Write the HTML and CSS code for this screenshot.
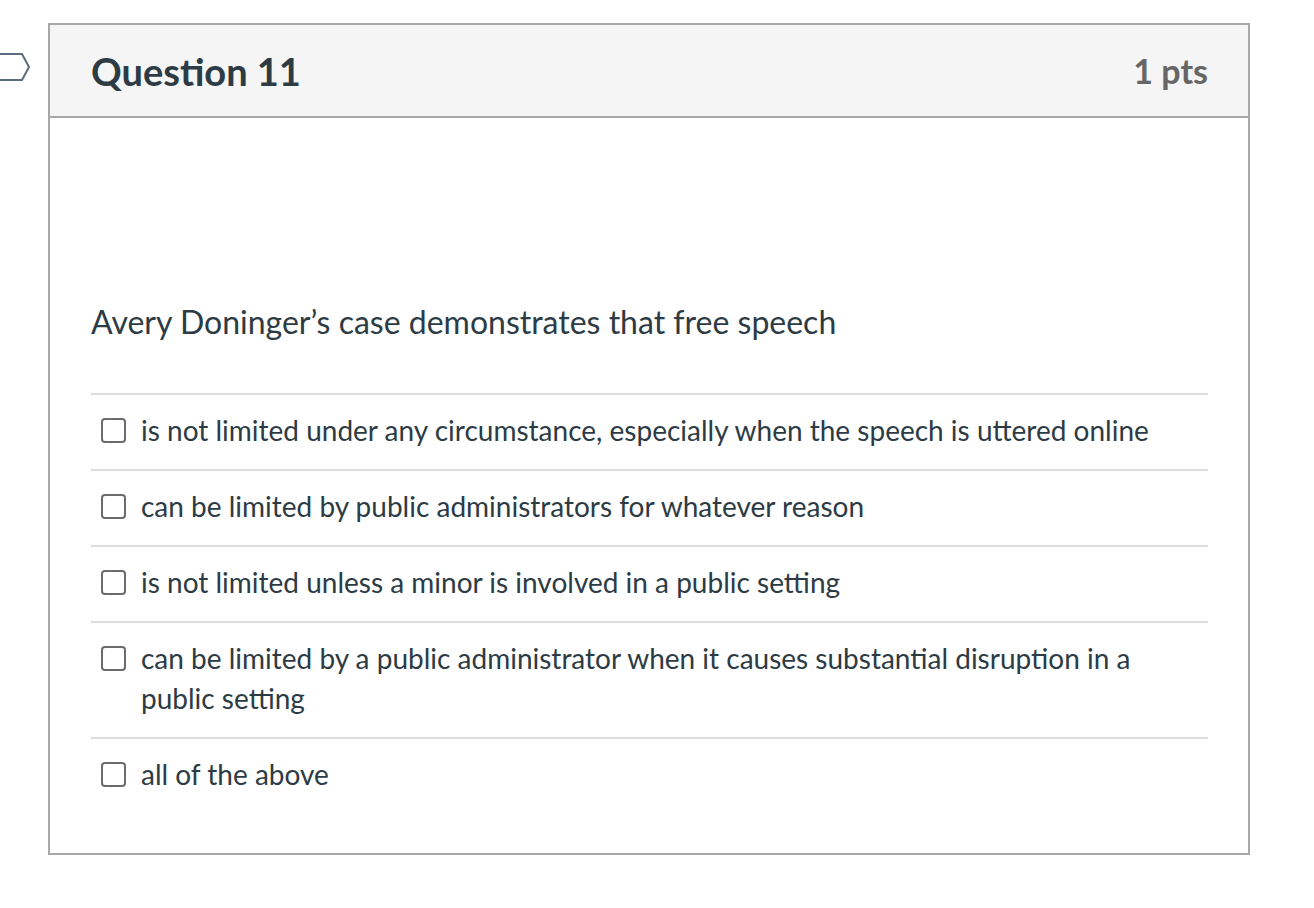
FILE: index.html
```html
<!DOCTYPE html>
<html lang="en">
<head>
<meta charset="utf-8">
<title>Question 11</title>
<link rel="stylesheet" href="styles.css">
</head>
<body>
<div class="page">
  <svg class="flag" width="34" height="32" viewBox="0 0 34 32" aria-hidden="true">
    <path d="M-4 2 H22 L29 15 L22 28 H-4" fill="none" stroke="#5b6d7d" stroke-width="2" stroke-linejoin="round"/>
  </svg>
  <div class="card">
    <div class="card-header">
      <h2 class="q-title">Question 11</h2>
      <div class="q-points">1 pts</div>
    </div>
    <div class="card-body">
      <p class="q-text">Avery Doninger’s case demonstrates that free speech</p>
      <ul class="answers">
        <li class="answer"><span class="box"></span><span class="label">is not limited under any circumstance, especially when the speech is uttered online</span></li>
        <li class="answer"><span class="box"></span><span class="label">can be limited by public administrators for whatever reason</span></li>
        <li class="answer"><span class="box"></span><span class="label">is not limited unless a minor is involved in a public setting</span></li>
        <li class="answer"><span class="box"></span><span class="label">can be limited by a public administrator when it causes substantial disruption in a public setting</span></li>
        <li class="answer"><span class="box"></span><span class="label">all of the above</span></li>
      </ul>
    </div>
  </div>
</div>
</body>
</html>
```

FILE: styles.css
```css
html, body {
  margin: 0;
  padding: 0;
  background: #ffffff;
}
body {
  font-family: Lato, "Open Sans", "Liberation Sans", sans-serif;
  color: #2d3b45;
}
.page {
  position: relative;
  padding: 23px 0 0 48px;
  width: 1202px;
}
.flag {
  position: absolute;
  left: 0;
  top: 52px;
}
.card {
  border: 2px solid #a8a8a8;
  width: 1198px;
  box-sizing: content-box;
}
.card-header {
  display: flex;
  justify-content: space-between;
  align-items: center;
  background: #f5f5f5;
  border-bottom: 2px solid #a8a8a8;
  height: 91px;
  padding: 0 40px 0 41px;
}
.q-title {
  margin: 0;
  font-size: 38px;
  font-weight: 700;
  color: #2d3b45;
  letter-spacing: 0;
}
.q-points {
  font-size: 34px;
  font-weight: 700;
  color: #666666;
}
.card-body {
  padding: 184px 40px 40px 41px;
}
.q-text {
  margin: 0 0 51px 0;
  font-size: 32px;
  line-height: 40px;
}
.answers {
  list-style: none;
  margin: 0;
  padding: 0;
}
.answer {
  display: flex;
  align-items: flex-start;
  border-top: 2px solid #dddddd;
  padding: 15px 0 19px 0;
  font-size: 28px;
  line-height: 40px;
}
.box {
  flex: none;
  width: 21px;
  height: 21px;
  border: 2px solid #6b6b6b;
  border-radius: 4px;
  margin: 8px 15px 0 10px;
  background: #fff;
}
.label {
  flex: 1;
}
```
